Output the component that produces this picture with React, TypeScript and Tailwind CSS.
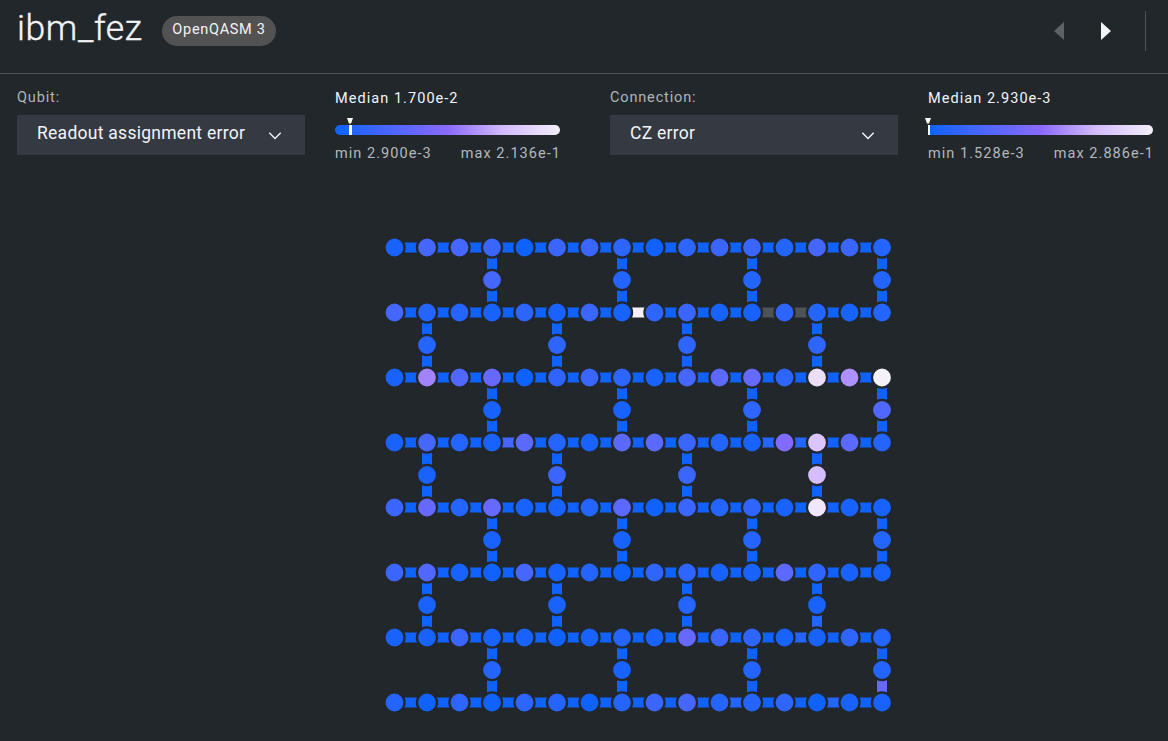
import React from "react";

const PITCH = 32.5;

const palette: Record<string, string> = {
  "0": "#0f62fe",
  "1": "#1863fe",
  "2": "#2464ff",
  "3": "#2e65ff",
  "4": "#3a66ff",
  "5": "#4567ff",
  "6": "#5068ff",
  "7": "#5b69ff",
  "8": "#6669ff",
  "9": "#806aff",
  p: "#a283ff",
  q: "#ae91ff",
  k: "#d6bdff",
  l: "#dac5ff",
  f: "#ebdff8",
  v: "#f0e8fa",
  w: "#f5f1f9",
  x: "#4d5358",
};

const rows = [
  "1554044303442542",
  "5221314134113212",
  "1p68034315783fqw",
  "1521721774219l72",
  "4828112704231v11",
  "4610512033117311",
  "1141101218431132",
  "2030320245223011",
];

const gaps = ["5222", "2333", "1136", "144k", "1122", "1121", "2122"];

const horizontalEdges: Record<string, string> = {
  "1-7": "w",
  "1-11": "x",
  "1-12": "x",
  "3-3": "5",
  "3-11": "2",
  "3-12": "2",
  "6-12": "2",
  "7-10": "2",
  "7-13": "2",
};

const verticalEdges: Record<string, string> = {
  "5-13-1": "2",
  "6-15-1": "8",
};

function QubitMap() {
  const edges: React.ReactNode[] = [];
  const nodes: React.ReactNode[] = [];
  const node = (x: number, y: number, c: string) =>
    nodes.push(
      <circle key={`${x}-${y}`} cx={x} cy={y} r={10.05} fill={palette[c]} stroke="#22272b" strokeWidth={2.3} />
    );

  rows.forEach((row, r) => {
    const y = 17.5 + r * 65;
    row.split("").forEach((c, i) => {
      const x = 14.5 + i * PITCH;
      node(x, y, c);
      if (i < 15) {
        edges.push(
          <rect key={`h${r}-${i}`} x={x} y={y - 5} width={PITCH} height={10} fill={palette[horizontalEdges[`${r}-${i}`] ?? "0"]} />
        );
      }
    });
  });

  gaps.forEach((gap, r) => {
    const first = r % 2 === 0 ? 3 : 1;
    gap.split("").forEach((c, k) => {
      const col = first + k * 4;
      const x = 14.5 + col * PITCH;
      const y = 17.5 + r * 65;
      node(x, y + PITCH, c);
      [0, 1].forEach((half) => {
        edges.push(
          <rect key={`v${r}-${col}-${half}`} x={x - 5} y={y + half * PITCH} width={10} height={PITCH} fill={palette[verticalEdges[`${r}-${col}-${half}`] ?? "0"]} />
        );
      });
    });
  });

  return (
    <svg width="516" height="490" viewBox="0 0 516 490" className="block">
      {edges}
      {nodes}
    </svg>
  );
}

function Select({ label, value }: { label: string; value: string }) {
  return (
    <div className="w-72 shrink-0">
      <div className="h-[41px] pt-[13px] text-[14.5px] leading-[22px] tracking-[0.85px] text-[#b0b5b8]">{label}</div>
      <button className="flex h-10 w-full items-center justify-between bg-[#353a42] pr-[22px] pb-[3px] pl-5 text-[17.5px] tracking-[0.27px] text-[#f2f4f8]">
        <span>{value}</span>
        <svg width="16" height="16" viewBox="0 0 16 16" className="translate-y-[2px]">
          <path d="M2.3 4.7 8 10.5l5.7-5.8" fill="none" stroke="#f2f4f8" strokeWidth="1.4" />
        </svg>
      </button>
    </div>
  );
}

function Legend({ median, min, max, edge }: { median: string; min: string; max: string; edge?: boolean }) {
  return (
    <div className="w-[225px] shrink-0 text-[14.5px] leading-[22px] tracking-[1.05px]">
      <div className="h-11 pt-[14px] text-[#f2f4f8]">Median {median}</div>
      <svg width="235" height="18" viewBox="-5 0 235 18" className="-ml-[5px] block">
        <defs>
          <linearGradient id={edge ? "scale-cz" : "scale-ro"}>
            <stop offset="0" stopColor="#0f62fe" />
            <stop offset="0.5" stopColor="#8a6aff" />
            <stop offset="0.75" stopColor="#d4bbff" />
            <stop offset="1" stopColor="#f2eff8" />
          </linearGradient>
        </defs>
        <rect y="7" width="225" height="10" rx="5" fill={edge ? "url(#scale-cz)" : "url(#scale-ro)"} />
        {edge ? (
          <>
            <rect x="0" y="7" width="5" height="10" fill="#0f62fe" />
            <rect x="0" y="7" width="2" height="10" fill="#fff" />
            <path d="M-3 0H3L1 5.5H-1Z" fill="#fff" />
          </>
        ) : (
          <>
            <rect x="14" y="7" width="3" height="10" fill="#fff" />
            <path d="M12 0H18L16 5.5H14Z" fill="#fff" />
          </>
        )}
      </svg>
      <div className="-mr-[1px] flex justify-between pt-[7px] text-[#b3b8bb]">
        <span>min {min}</span>
        <span>max {max}</span>
      </div>
    </div>
  );
}

export default function App() {
  return (
    <main className="h-[741px] w-[1168px] overflow-hidden bg-[#22272b] font-[Roboto,sans-serif] text-[#f2f4f8]">
      <header className="flex h-[74px] items-start justify-between border-b border-[#4d5358] pl-[17px]">
        <div className="flex">
          <h1 className="w-[125px] pt-[5px] text-[35.5px] leading-[46px] font-light tracking-[0.6px] [-webkit-text-stroke:0.4px_#f2f4f8]">ibm_fez</h1>
          <span className="mt-4 ml-5 flex h-[30px] w-[114px] items-center justify-center rounded-full bg-[#525252] pb-[3px] text-[14.5px] tracking-[0.7px] whitespace-nowrap">OpenQASM 3</span>
        </div>
        <div className="flex pt-[11px] pr-[22px]">
          <svg width="100" height="40" viewBox="0 0 100 40">
            <path d="M19 11V29L9 20Z" fill="#5d6265" />
            <path d="M56 11V29L66 20Z" fill="#f2f4f8" />
          </svg>
          <div className="h-10 w-px bg-[#4d5358]" />
        </div>
      </header>
      <section className="flex pl-[17px]">
        <Select label="Qubit:" value="Readout assignment error" />
        <div className="w-[30px] shrink-0" />
        <Legend median="1.700e-2" min="2.900e-3" max="2.136e-1" />
        <div className="w-[50px] shrink-0" />
        <Select label="Connection:" value="CZ error" />
        <div className="w-[30px] shrink-0" />
        <Legend median="2.930e-3" min="1.528e-3" max="2.886e-1" edge />
      </section>
      <section className="pt-[65px] pl-[380px]">
        <QubitMap />
      </section>
    </main>
  );
}
